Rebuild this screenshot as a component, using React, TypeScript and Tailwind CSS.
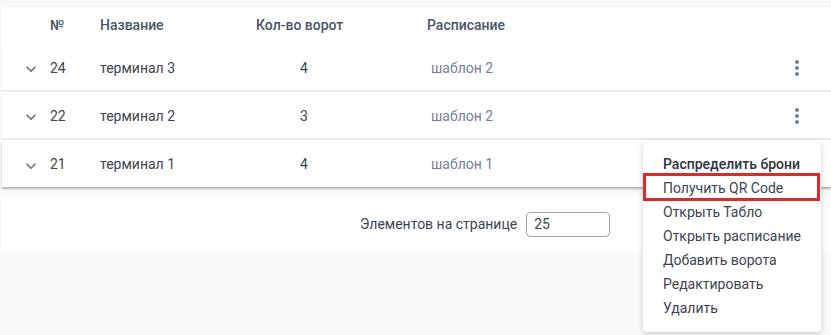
import { useState } from "react";

type Terminal = { id: number; name: string; gates: number; schedule: string };

const rows: Terminal[] = [
  { id: 24, name: "терминал 3", gates: 4, schedule: "шаблон 2" },
  { id: 22, name: "терминал 2", gates: 3, schedule: "шаблон 2" },
  { id: 21, name: "терминал 1", gates: 4, schedule: "шаблон 1" },
];

const menuItems = [
  "Получить QR Code",
  "Открыть Табло",
  "Открыть расписание",
  "Добавить ворота",
  "Редактировать",
  "Удалить",
];

function ExpandIcon() {
  return (
    <svg width="20" height="20" viewBox="0 0 24 24" className="fill-[#6b7280]">
      <path d="M16.59 8.59 12 13.17 7.41 8.59 6 10l6 6 6-6z" />
    </svg>
  );
}

function MoreIcon() {
  return (
    <svg width="24" height="24" viewBox="0 0 24 24" className="fill-[#718096]">
      <path d="M12 8c1.1 0 2-.9 2-2s-.9-2-2-2-2 .9-2 2 .9 2 2 2zm0 2c-1.1 0-2 .9-2 2s.9 2 2 2 2-.9 2-2-.9-2-2-2zm0 6c-1.1 0-2 .9-2 2s.9 2 2 2 2-.9 2-2-.9-2-2-2z" />
    </svg>
  );
}

export default function App() {
  const [perPage, setPerPage] = useState("25");

  return (
    <div className="relative h-[335px] w-[831px] overflow-hidden bg-[#f8f9fb] pl-[2px] pt-[7px] font-['Roboto',sans-serif] text-[14px]">
      {/* table */}
      <div className="bg-white">
        <div className="flex h-[37px] items-center font-medium text-[#4a5568]">
          <div className="w-[48px]" />
          <div className="w-[50px]">№</div>
          <div className="w-[156px]">Название</div>
          <div className="w-[171px]">Кол-во ворот</div>
          <div>Расписание</div>
        </div>
        <div className="flex flex-col gap-[2px] bg-[#f3f4f6]">
          {rows.map((r, i) => (
            <div
              key={r.id}
              className={`flex h-[46px] items-center bg-white pt-[2px] text-[#3d4451] ${
                i === rows.length - 1
                  ? "h-[47px] shadow-[0_2px_2px_rgba(0,0,0,0.28)]"
                  : "shadow-[0_1px_1px_rgba(0,0,0,0.06)]"
              }`}
            >
              <div className="flex w-[48px] justify-start pl-[19px] pt-[2px]">
                <ExpandIcon />
              </div>
              <div className="w-[50px]">{r.id}</div>
              <div className="w-[130px]">{r.name}</div>
              <div className="w-[148px] text-center">{r.gates}</div>
              <div className="w-[53px]" />
              <div className="flex-1 text-[#718096]">{r.schedule}</div>
              {i < rows.length - 1 && (
                <div className="mr-[22px] flex w-[24px] justify-center">
                  <MoreIcon />
                </div>
              )}
            </div>
          ))}
        </div>
      </div>

      {/* pagination */}
      <div className="mt-[9px] flex h-[56px] items-center bg-white pl-[358px] text-[#3d4451]">
        <span>Элементов на странице</span>
        <input
          value={perPage}
          onChange={(e) => setPerPage(e.target.value)}
          className="ml-[9px] h-[25px] w-[84px] rounded-[4px] border border-[#9ca3af] px-[7px] text-[14px] outline-none"
        />
      </div>

      {/* action menu */}
      <div className="absolute left-[643px] top-[141px] w-[178px] rounded-[4px] bg-white pb-[12px] pt-[11px] shadow-[0_2px_6px_rgba(0,0,0,0.18)]">
        <div className="flex h-[24px] items-center pl-[20px] font-medium text-[#2d3340]">
          Распределить брони
        </div>
        {menuItems.map((m) => (
          <div key={m} className="flex h-[24px] items-center pl-[20px] text-[#3d4451]">
            {m}
          </div>
        ))}
        <div className="absolute left-0 top-[32px] h-[28px] w-[177px] border-[3px] border-[#e3262a]" />
      </div>
    </div>
  );
}
